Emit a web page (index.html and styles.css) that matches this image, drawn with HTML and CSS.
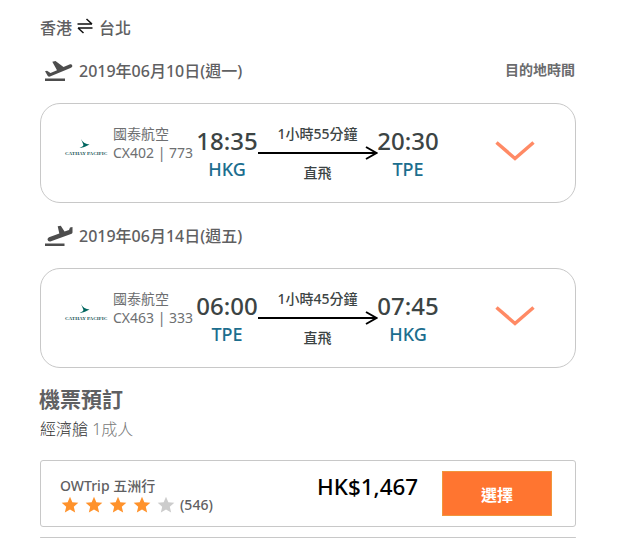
FILE: index.html
```html
<!doctype html>
<html lang="zh-Hant">
<head>
	<meta charset="UTF-8">
	<title>機票預訂</title>
	<link rel="stylesheet" href="styles.css">
</head>
<body>
	<svg class="symbols">
		<symbol id="bird" viewBox="0 0 42 11">
			<path d="M16 0C17.500 3.500 21 5 24.500 5.500L20.500 7.500Q18 9 14.500 8.500Q19 7.500 18.300 5.500Q17.500 3.500 16 0Z" fill="#00665f"/>
		</symbol>
		<symbol id="arrow" viewBox="0 0 121 14">
			<path d="M1 7H119M109 1L119.500 7L109 13" fill="none" stroke="#000" stroke-width="2"/>
		</symbol>
		<symbol id="chevron" viewBox="0 0 40 20">
			<path d="M1.500 1.500L20 17.500L38.500 1.500" fill="none" stroke="#ff8a65" stroke-width="3.500"/>
		</symbol>
		<symbol id="star" viewBox="0 0 24 24">
			<path d="M12 17.270L18.180 21l-1.640-7.030L22 9.240l-7.190-.61L12 2 9.190 8.630 2 9.240l5.460 4.730L5.820 21z"/>
		</symbol>
	</svg>
	<div class="page">
		<div class="route">
			<span>香港</span>
			<svg class="swap" viewBox="0 0 16 16"><path d="M0.500 6H15M9.500 1L15 6M15.500 10H1M1 10L6.500 15" fill="none" stroke="#111" stroke-width="1.500"/></svg>
			<span>台北</span>
		</div>

		<div class="date-row">
			<svg class="plane" viewBox="0 0 28 22"><path d="M0 17.500H20V20H0ZM0 10.300L2 9.700L5.500 12L12 9.200L7.300 .8L10.500 0L18.500 6L24.500 3.500C26 3 27.300 3.800 27.300 5C27.300 6 26.500 6.500 25.500 7L5 15.600Q3.500 16 2.800 15Z"/></svg>
			<span class="date">2019年06月10日(週一)</span>
			<span class="local">目的地時間</span>
		</div>
		<div class="flight">
			<div class="logo"><svg><use href="#bird"/></svg><span>CATHAY PACIFIC</span></div>
			<div class="airline">國泰航空<br>CX402 | 773</div>
			<div class="place"><b>18:35</b><span>HKG</span></div>
			<div class="way">
				<span>1小時55分鐘</span>
				<svg><use href="#arrow"/></svg>
				<span>直飛</span>
			</div>
			<div class="place"><b>20:30</b><span>TPE</span></div>
			<svg class="chevron"><use href="#chevron"/></svg>
		</div>

		<div class="date-row">
			<svg class="plane" viewBox="0 0 28 22"><path d="M0 17.500H19.500V20H0ZM2.500 13.500Q2.500 12 4 11.300L14.300 7.500L12.700 .2L15.800 -.2L19.500 5.500L24 4L25 1.500L27.500 1V6.500Q27.300 7.500 26 8L6 15.200Q3 16 2.500 13.500Z"/></svg>
			<span class="date">2019年06月14日(週五)</span>
		</div>
		<div class="flight">
			<div class="logo"><svg><use href="#bird"/></svg><span>CATHAY PACIFIC</span></div>
			<div class="airline">國泰航空<br>CX463 | 333</div>
			<div class="place"><b>06:00</b><span>TPE</span></div>
			<div class="way">
				<span>1小時45分鐘</span>
				<svg><use href="#arrow"/></svg>
				<span>直飛</span>
			</div>
			<div class="place"><b>07:45</b><span>HKG</span></div>
			<svg class="chevron"><use href="#chevron"/></svg>
		</div>

		<h2>機票預訂</h2>
		<div class="cabin">經濟艙 <span>1成人</span></div>

		<div class="offer">
			<div class="agent">
				<div>OWTrip 五洲行</div>
				<div class="stars">
					<svg><use href="#star"/></svg>
					<svg><use href="#star"/></svg>
					<svg><use href="#star"/></svg>
					<svg><use href="#star"/></svg>
					<svg class="off"><use href="#star"/></svg>
					<span>(546)</span>
				</div>
			</div>
			<div class="price">HK$1,467</div>
			<button class="select">選擇</button>
		</div>
		<div class="offer next"></div>
	</div>
</body>
</html>
```
FILE: styles.css
```css
*{
	margin: 0;
	padding: 0;
	box-sizing: border-box;
}
body{
	height: 538px;
	overflow: hidden;
	background: #fff;
	color: #5f6062;
	font-family: "Noto Sans", "Noto Sans CJK TC", sans-serif;
	font-size: 14px;
	font-weight: 500;
}
svg{
	display: block;
	flex: none;
	overflow: visible;
}
.symbols{
	width: 0;
	height: 0;
	overflow: hidden;
}
.page{
	width: 536px;
	margin: 0 auto 0 40px;
	padding-top: 16px;
}
.route{
	display: flex;
	height: 24px;
	font-size: 16px;
	line-height: 24px;
}
.swap{
	width: 16px;
	height: 16px;
	margin: 2px 6px 0 5px;
}
.date-row{
	display: flex;
	align-items: center;
	height: 24px;
	margin-top: 19px;
	padding-left: 5px;
}
.plane{
	width: 28px;
	height: 22px;
	margin-top: 2px;
	fill: #4d4d4d;
}
.date{
	margin-left: 6px;
	font-size: 16px;
	line-height: 24px;
}
.local{
	margin: -2px 1px 0 auto;
	line-height: 20px;
	font-weight: 600;
	color: #6b6c6e;
}
.flight{
	display: flex;
	height: 100px;
	margin: 20px 0 21px;
	padding-left: 24px;
	border: 1px solid #c8c8c8;
	border-radius: 20px;
}
.logo{
	width: 42px;
	margin-top: 35px;
}
.logo svg{
	width: 42px;
	height: 11px;
}
.logo span{
	display: block;
	color: #1c5558;
	font: bold 5px/7px "Liberation Serif", serif;
	white-space: nowrap;
}
.airline{
	width: 83.5px;
	margin: 20px 0 0 6px;
	color: #6e6f71;
	line-height: 19px;
	font-weight: 400;
	white-space: nowrap;
}
.place{
	display: flex;
	flex-direction: column;
	align-items: center;
	width: 61px;
	padding-top: 21px;
}
.place b{
	color: #3c4444;
	font-size: 24px;
	line-height: 32px;
	font-weight: 500;
}
.place span{
	color: #1c6e8e;
	font-size: 18px;
	line-height: 24px;
}
.way{
	display: flex;
	flex-direction: column;
	align-items: center;
	width: 120px;
	padding-top: 20px;
	color: #3c4444;
	line-height: 20px;
}
.way svg{
	width: 121px;
	height: 14px;
	margin: 2px 0 3px;
}
.chevron{
	width: 40px;
	height: 20px;
	margin: 37px 0 0 56.5px;
}
h2{
	margin: -6px 0 0 -1px;
	font-size: 21px;
	line-height: 32px;
}
.cabin{
	margin: 2px 0 19px;
	color: #333;
	font-size: 16px;
	line-height: 24px;
	font-weight: 300;
}
.cabin span{
	color: #777;
}
.offer{
	display: flex;
	height: 67px;
	margin-bottom: 10px;
	padding: 10px 23px 0 19px;
	border: 1px solid #c8c8c8;
	border-radius: 3px;
}
.agent{
	width: 257px;
	padding-top: 5px;
	line-height: 20px;
}
.stars{
	display: flex;
	align-items: center;
	gap: 4px;
	height: 18px;
}
.stars svg{
	width: 20px;
	height: 20px;
	fill: #ff922b;
}
.stars .off{
	fill: #ccc;
}
.price{
	color: #000;
	font-size: 22.4px;
	line-height: 31px;
}
.select{
	width: 110px;
	height: 45px;
	margin-left: auto;
	border: 1px solid #f0963c;
	background: #ff7530;
	color: #fff;
	font-family: inherit;
	font-size: 16px;
	font-weight: 700;
}
.next{
	height: 1px;
	margin: 0;
	padding: 0;
	border-width: 1px 0 0;
}
```
